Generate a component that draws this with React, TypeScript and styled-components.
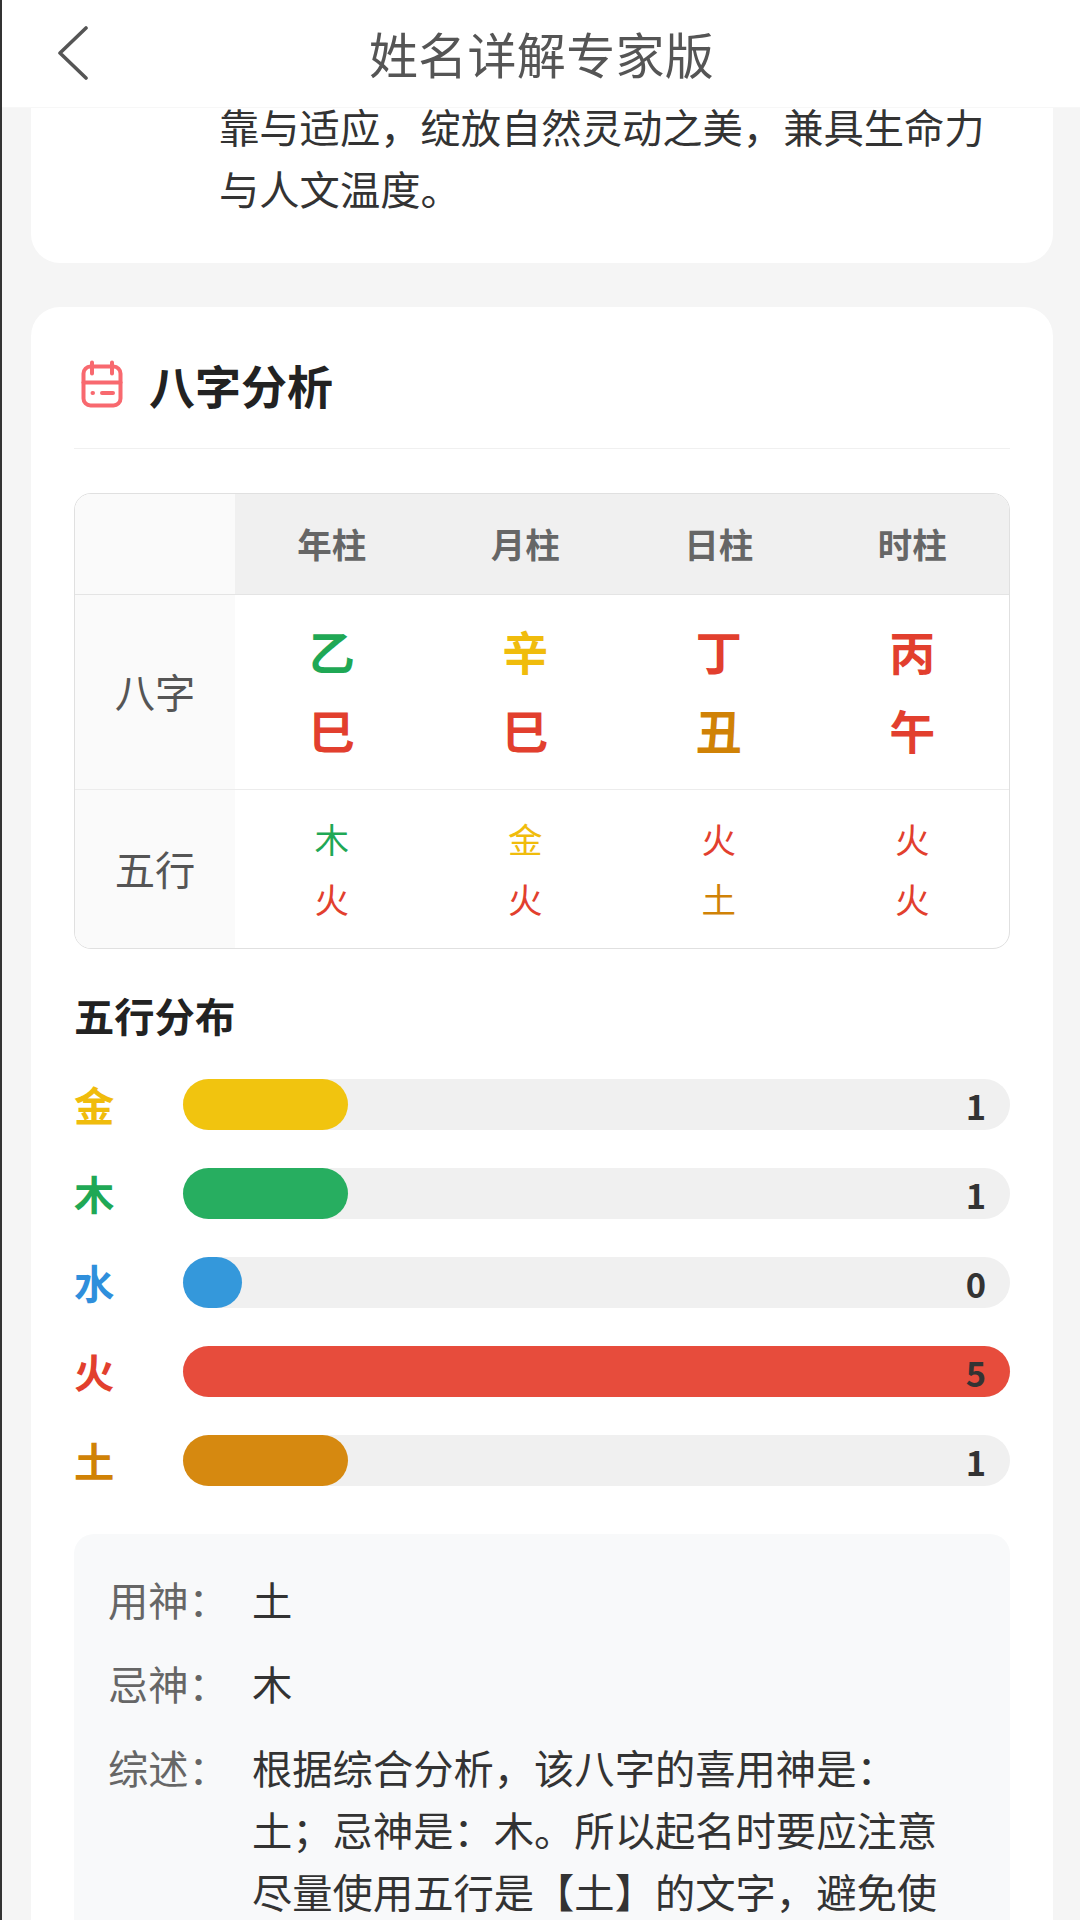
import styled, { createGlobalStyle } from 'styled-components';

const GlobalStyle = createGlobalStyle`
    html, body {
        margin: 0;
        padding: 0;
        background: #f5f5f5;
    }
    * {
        box-sizing: border-box;
    }
`;

const Page = styled.div`
    position: relative;
    width: 1080px;
    height: 1920px;
    overflow: hidden;
    border-left: 2px solid #333;
    padding: 0 27px 0 29px;
    background: #f5f5f5;
    color: #333;
    font-family: "Noto Sans CJK SC", "Noto Sans", sans-serif;
`;

const Header = styled.header`
    position: absolute;
    top: 0;
    left: 0;
    right: 0;
    z-index: 2;
    height: 108px;
    display: flex;
    align-items: center;
    justify-content: center;
    padding-bottom: 2px;
    background: #fff;
    border-bottom: 1px solid #f7f7f7;
`;

const BackButton = styled.svg`
    position: absolute;
    left: 54px;
    top: 26px;
    width: 34px;
    height: 54px;
    fill: none;
    stroke: #555;
    stroke-width: 3.6;
    stroke-linecap: round;
    stroke-linejoin: round;
`;

const Title = styled.h1`
    margin: 0 0 0 1px;
    font-size: 49px;
    font-weight: 400;
    letter-spacing: 0.3px;
    color: #555;
`;

const Card = styled.section`
    background: #fff;
    border-radius: 29px;
`;

const IntroCard = styled(Card)`
    padding: 95px 43px 44px 188px;
    margin-bottom: 44px;
    border-radius: 0 0 29px 29px;
`;

const IntroText = styled.p`
    margin: 0;
    font-size: 40.3px;
    line-height: 62px;
    color: #333;
`;

const AnalysisCard = styled(Card)`
    height: 1700px;
    padding: 43px 43px 0;
`;

const SectionHead = styled.div`
    display: flex;
    align-items: center;
    gap: 26px;
    height: 99px;
    padding: 0 0 31px 7px;
    border-bottom: 1px solid #f0f0f0;
`;

const SectionTitle = styled.h2`
    margin: 1px 0 0;
    font-size: 46px;
    font-weight: 700;
    line-height: 60px;
    color: #222;
`;

const PillarTable = styled.div`
    margin-top: 44px;
    border: 1px solid #e0e0e0;
    border-radius: 17px;
    overflow: hidden;
`;

const PillarRow = styled.div<{ $height: number; $line?: string }>`
    display: grid;
    grid-template-columns: 160px repeat(4, 1fr);
    height: ${p => p.$height}px;
    border-bottom: ${p => p.$line ?? 'none'};
`;

const RowLabel = styled.div`
    display: flex;
    align-items: center;
    justify-content: center;
    padding-bottom: 4px;
    background: #fafafa;
    font-size: 40.3px;
    color: #555;
`;

const ColumnHead = styled.div`
    display: flex;
    align-items: center;
    justify-content: center;
    padding-bottom: 2px;
    background: #f0f0f0;
    font-size: 34.5px;
    font-weight: 700;
    color: #666;
`;

const PillarCell = styled.div<{ $lift: number }>`
    display: flex;
    flex-direction: column;
    align-items: center;
    justify-content: center;
    padding-bottom: ${p => p.$lift}px;
`;

const Stem = styled.span<{ $color: string }>`
    font-size: 46px;
    font-weight: 700;
    line-height: 79px;
    color: ${p => p.$color};
`;

const Element = styled.span<{ $color: string }>`
    font-size: 34.5px;
    line-height: 60px;
    color: ${p => p.$color};
`;

const SubTitle = styled.h3`
    margin: 38px 0 36px;
    font-size: 40.3px;
    font-weight: 700;
    line-height: 56px;
    color: #222;
`;

const BarList = styled.div`
    display: flex;
    flex-direction: column;
    gap: 38px;
`;

const BarRow = styled.div`
    display: flex;
    align-items: center;
    height: 51px;
`;

const BarLabel = styled.span<{ $color: string }>`
    width: 108.5px;
    padding-bottom: 2px;
    font-size: 40.3px;
    font-weight: 700;
    line-height: 50px;
    color: ${p => p.$color};
`;

const Track = styled.div`
    position: relative;
    flex: 1;
    height: 100%;
    border-radius: 25.5px;
    background: #f0f0f0;
`;

const Fill = styled.div<{ $color: string }>`
    height: 100%;
    min-width: 59px;
    border-radius: 25.5px;
    background: ${p => p.$color};
`;

const BarValue = styled.span`
    position: absolute;
    top: 0;
    right: 24px;
    font-size: 34.5px;
    font-weight: 700;
    line-height: 53px;
    color: #333;
`;

const InfoBox = styled.div`
    margin-top: 48px;
    padding: 34px 34px;
    border-radius: 20px;
    background: #f8f9fa;
    display: flex;
    flex-direction: column;
    gap: 22px;
`;

const InfoRow = styled.div`
    display: flex;
    font-size: 40.3px;
    line-height: 62px;
`;

const InfoLabel = styled.span`
    flex: none;
    width: 144px;
    color: #666;
`;

const InfoValue = styled.span`
    flex: none;
    width: 720px;
    color: #333;
`;

const colors = {
    金: '#f1c40f',
    木: '#27ae60',
    水: '#3498db',
    火: '#e74c3c',
    土: '#d68910',
};

const textColors = {
    金: '#f0bc0c',
    木: '#1fa855',
    水: '#2f8fdc',
    火: '#e23f2e',
    土: '#d08206',
};

type Wuxing = keyof typeof colors;

const pillars: { head: string; stem: [string, Wuxing]; branch: [string, Wuxing] }[] = [
    { head: '年柱', stem: ['乙', '木'], branch: ['巳', '火'] },
    { head: '月柱', stem: ['辛', '金'], branch: ['巳', '火'] },
    { head: '日柱', stem: ['丁', '火'], branch: ['丑', '土'] },
    { head: '时柱', stem: ['丙', '火'], branch: ['午', '火'] },
];

const distribution: { name: Wuxing; count: number }[] = [
    { name: '金', count: 1 },
    { name: '木', count: 1 },
    { name: '水', count: 0 },
    { name: '火', count: 5 },
    { name: '土', count: 1 },
];

const CalendarIcon = () => (
    <svg width="42" height="48" viewBox="0 0 42 48" fill="none" stroke="#f8696f" strokeWidth="4" strokeLinecap="round">
        <rect x="2.5" y="6.5" width="37" height="39" rx="7" />
        <path d="M2.5 22.5h37" />
        <path d="M11 2.5v11M31 2.5v11" />
        <path d="M11.5 33h.5M21 33h11" />
    </svg>
);

export default function App() {
    return (
        <>
            <GlobalStyle />
            <Page>
                <Header>
                    <BackButton viewBox="0 0 34 54">
                        <path d="M30 2 4 27l26 25" />
                    </BackButton>
                    <Title>姓名详解专家版</Title>
                </Header>

                <IntroCard>
                    <IntroText>靠与适应，绽放自然灵动之美，兼具生命力与人文温度。</IntroText>
                </IntroCard>

                <AnalysisCard>
                    <SectionHead>
                        <CalendarIcon />
                        <SectionTitle>八字分析</SectionTitle>
                    </SectionHead>

                    <PillarTable>
                        <PillarRow $height={101} $line="1px solid #e4e4e4">
                            <RowLabel />
                            {pillars.map(p => (
                                <ColumnHead key={p.head}>{p.head}</ColumnHead>
                            ))}
                        </PillarRow>
                        <PillarRow $height={195} $line="1px solid #ececec">
                            <RowLabel>八字</RowLabel>
                            {pillars.map(p => (
                                <PillarCell key={p.head} $lift={5}>
                                    <Stem $color={textColors[p.stem[1]]}>{p.stem[0]}</Stem>
                                    <Stem $color={textColors[p.branch[1]]}>{p.branch[0]}</Stem>
                                </PillarCell>
                            ))}
                        </PillarRow>
                        <PillarRow $height={158}>
                            <RowLabel>五行</RowLabel>
                            {pillars.map(p => (
                                <PillarCell key={p.head} $lift={2}>
                                    <Element $color={textColors[p.stem[1]]}>{p.stem[1]}</Element>
                                    <Element $color={textColors[p.branch[1]]}>{p.branch[1]}</Element>
                                </PillarCell>
                            ))}
                        </PillarRow>
                    </PillarTable>

                    <SubTitle>五行分布</SubTitle>
                    <BarList>
                        {distribution.map(d => (
                            <BarRow key={d.name}>
                                <BarLabel $color={textColors[d.name]}>{d.name}</BarLabel>
                                <Track>
                                    <Fill $color={colors[d.name]} style={{ width: `${d.count * 20}%` }} />
                                    <BarValue>{d.count}</BarValue>
                                </Track>
                            </BarRow>
                        ))}
                    </BarList>

                    <InfoBox>
                        <InfoRow>
                            <InfoLabel>用神：</InfoLabel>
                            <InfoValue>土</InfoValue>
                        </InfoRow>
                        <InfoRow>
                            <InfoLabel>忌神：</InfoLabel>
                            <InfoValue>木</InfoValue>
                        </InfoRow>
                        <InfoRow>
                            <InfoLabel>综述：</InfoLabel>
                            <InfoValue>根据综合分析，该八字的喜用神是：土；忌神是：木。所以起名时要应注意尽量使用五行是【土】的文字，避免使</InfoValue>
                        </InfoRow>
                    </InfoBox>
                </AnalysisCard>
            </Page>
        </>
    );
}
